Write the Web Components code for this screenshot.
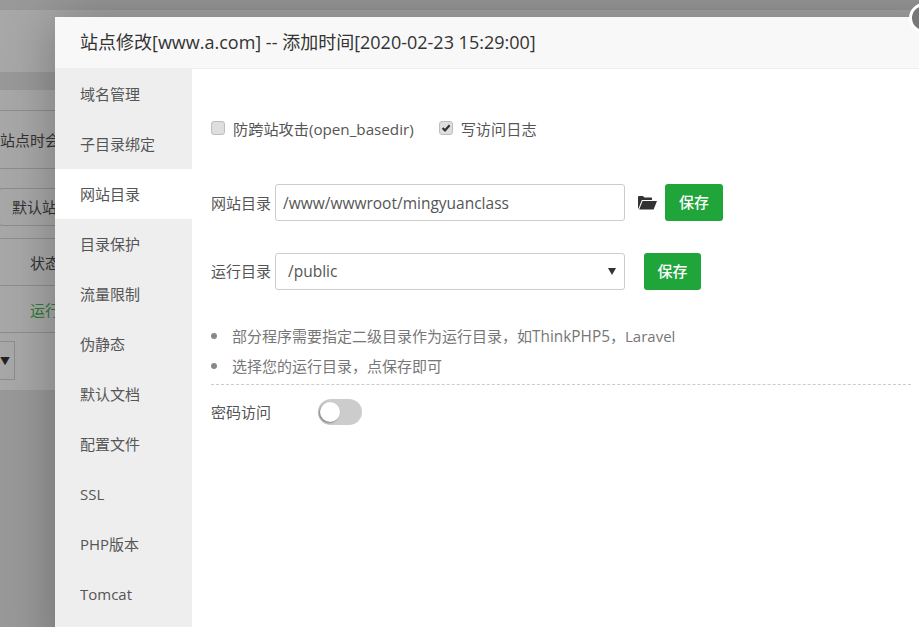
<!DOCTYPE html>
<html lang="zh">
<head>
<meta charset="utf-8">
<title>站点修改</title>
<style>
  html, body { margin: 0; height: 100%; overflow: hidden; }
  body { font-family: "Open Sans", "Noto Sans CJK SC", sans-serif; color: #555; }
</style>
</head>
<body>
<site-backdrop></site-backdrop>
<site-modal heading="站点修改[www.a.com] -- 添加时间[2020-02-23 15:29:00]">
  <side-menu slot="menu" active="网站目录"></side-menu>
  <dir-panel></dir-panel>
</site-modal>

<script>
class SiteBackdrop extends HTMLElement {
  constructor() {
    super();
    this.attachShadow({mode: 'open'}).innerHTML = `
      <style>
        :host { display: block; height: 627px; background: #999; font-size: 15px; color: #333; overflow: hidden; }
        .top { height: 62px; margin-top: 10px; background: #a8a8a8; }
        .card { margin-top: 18px; background: #a8a8a8; height: 300px; }
        .row { height: 57px; border-bottom: 1px solid #8d8d8d; display: flex; align-items: center; box-sizing: border-box; }
        .head { height: 21px; }
        .hint { height: 58px; white-space: nowrap; }
        .tool { height: 70px; padding-top: 7px; }
        .tool span { margin-left: -1px; padding: 0 12px; height: 36px; line-height: 36px; border: 1px solid #8d8d8d; border-radius: 3px; white-space: nowrap; }
        .cell { height: 47px; padding-left: 30px; white-space: nowrap; }
        .run { color: #2f7a38; }
        .select { margin-top: 8px; width: 14px; height: 37px; border: 1px solid #8d8d8d; border-left: 0; display: flex; align-items: center; font-size: 10px; color: #222; }
      </style>
      <div class="top"></div>
      <div class="card">
        <div class="row head"></div>
        <div class="row hint">站点时会</div>
        <div class="row tool"><span>默认站点</span></div>
        <div class="row cell">状态</div>
        <div class="row cell run">运行中</div>
        <div class="select">▼</div>
      </div>`;
  }
}

class SiteModal extends HTMLElement {
  constructor() {
    super();
    this.attachShadow({mode: 'open'}).innerHTML = `
      <style>
        :host { display: block; position: absolute; left: 55px; top: 17px; width: 900px; height: 640px; background: #fff; box-shadow: 1px 1px 50px rgba(0,0,0,.3); }
        header { height: 51px; line-height: 51px; padding-left: 25px; background: #f8f8f8; border-bottom: 1px solid #eee; font-size: 18px; color: #333; white-space: nowrap; }
        .body { display: flex; height: 588px; }
        .close { position: absolute; left: 854px; top: -14px; width: 30px; height: 30px; box-sizing: border-box; border-radius: 50%; background: #777; border: 3px solid #fff; }
        .main { flex: 1; min-width: 0; }
      </style>
      <header></header>
      <div class="body"><slot name="menu"></slot><div class="main"><slot></slot></div></div>
      <div class="close"></div>`;
  }
  connectedCallback() {
    this.shadowRoot.querySelector('header').textContent = this.getAttribute('heading');
  }
}

class SideMenu extends HTMLElement {
  constructor() {
    super();
    this.attachShadow({mode: 'open'});
  }
  connectedCallback() {
    const items = ['域名管理','子目录绑定','网站目录','目录保护','流量限制','伪静态','默认文档','配置文件','SSL','PHP版本','Tomcat'];
    const active = this.getAttribute('active');
    this.shadowRoot.innerHTML = `
      <style>
        :host { display: block; width: 137px; flex: none; background: #eee; font-size: 15px; color: #555; }
        div { height: 50px; line-height: 50px; padding-left: 25px; white-space: nowrap; }
        .on { background: #fff; }
      </style>
      ${items.map(t => `<div class="${t === active ? 'on' : ''}">${t}</div>`).join('')}`;
  }
}

class CheckBox extends HTMLElement {
  constructor() {
    super();
    this.attachShadow({mode: 'open'});
  }
  connectedCallback() {
    const on = this.hasAttribute('checked');
    this.shadowRoot.innerHTML = `
      <style>
        :host { display: inline-flex; align-items: center; gap: 8px; font-size: 15.2px; color: #555; white-space: nowrap; }
        i { width: 12px; height: 12px; border: 1px solid #bdbdbd; border-radius: 3px; background: #dedede; display: block; }
        svg { display: block; }
      </style>
      <i>${on ? '<svg width="12" height="12" viewBox="0 0 12 12"><path d="M2.6 6l2.4 2.4L9.6 3.2" fill="none" stroke="#333" stroke-width="2.2"/></svg>' : ''}</i>
      <span><slot></slot></span>`;
  }
}

class SaveButton extends HTMLElement {
  constructor() {
    super();
    this.attachShadow({mode: 'open'}).innerHTML = `
      <style>
        :host { display: block; background: #20a53a; color: #fff; border-radius: 3px; font-size: 15px; font-weight: 500; text-align: center; height: 37px; line-height: 37px; }
      </style>
      <slot></slot>`;
  }
}

class DirPanel extends HTMLElement {
  constructor() {
    super();
    this.attachShadow({mode: 'open'}).innerHTML = `
      <style>
        :host { display: block; padding: 50px 44px 0 19px; font-size: 15px; color: #555; }
        .checks { display: flex; gap: 25px; height: 18px; align-items: center; }
        .row { display: flex; align-items: center; height: 37px; }
        .row.a { margin-top: 47px; }
        .row.b { margin-top: 32px; }
        .label { width: 64px; flex: none; white-space: nowrap; }
        .row.b .label { padding-bottom: 2px; }
        .box { height: 35px; border: 1px solid #ccc; border-radius: 3px; background: #fff; flex: none; display: flex; align-items: center; justify-content: space-between; white-space: nowrap; color: #555; font-size: 15.5px; }
        .box.path { padding-left: 7px; width: 341px; }
        .box.sel { padding: 0 8px 0 12px; width: 328px; }
        .box.sel span { padding-bottom: 2px; }
        .arrow { display: block; }
        .folder { margin: 0 8px 0 12px; display: block; }
        ul { margin: 31px 0 0; padding: 0; list-style: none; color: #777; }
        li { display: flex; height: 30px; line-height: 30px; white-space: nowrap; }
        li::before { content: ""; width: 6px; height: 6px; border-radius: 50%; background: #888; margin: 12px 15px 0 0; flex: none; }
        li b { font-weight: 400; font-size: 15.4px; }
        .rule { border-top: 1px dashed #ccc; margin-top: 3px; }
        .pw { display: flex; align-items: center; height: 26px; margin-top: 14px; }
        .pw span { padding-bottom: 2px; }
        .toggle { width: 44px; height: 26px; border-radius: 13px; background: #ccc; margin-left: 47px; position: relative; }
        .toggle::after { content: ""; position: absolute; left: 2px; top: 3px; width: 20px; height: 20px; border-radius: 50%; background: #fff; box-shadow: -1px 1px 2px rgba(0,0,0,.4); }
      </style>
      <div class="checks">
        <check-box>防跨站攻击(open_basedir)</check-box>
        <check-box checked>写访问日志</check-box>
      </div>
      <div class="row a">
        <span class="label">网站目录</span>
        <div class="box path">/www/wwwroot/mingyuanclass</div>
        <svg class="folder" width="20" height="15" viewBox="0 0 20 15"><path d="M1 13.5V2.2C1 1.5 1.5 1 2.2 1h3.8l1.4 1.6h6.6c.6 0 1 .4 1 1V5H4.8L1.5 13.5zM5.6 6H20l-3.4 8.5H2.2z" fill="#333"/></svg>
        <save-button style="width:58px">保存</save-button>
      </div>
      <div class="row b">
        <span class="label">运行目录</span>
        <div class="box sel"><span>/public</span><svg class="arrow" width="8" height="7" viewBox="0 0 8 7"><path d="M0 0h8L4 7z" fill="#333"/></svg></div>
        <save-button style="width:57px;margin-left:19px">保存</save-button>
      </div>
      <ul>
        <li><span>部分程序需要指定二级目录作为运行目录，如<b>ThinkPHP5</b>，Laravel</span></li>
        <li>选择您的运行目录，点保存即可</li>
      </ul>
      <div class="rule"></div>
      <div class="pw"><span>密码访问</span><div class="toggle"></div></div>`;
  }
}

customElements.define('site-backdrop', SiteBackdrop);
customElements.define('site-modal', SiteModal);
customElements.define('side-menu', SideMenu);
customElements.define('check-box', CheckBox);
customElements.define('save-button', SaveButton);
customElements.define('dir-panel', DirPanel);
</script>
</body>
</html>
